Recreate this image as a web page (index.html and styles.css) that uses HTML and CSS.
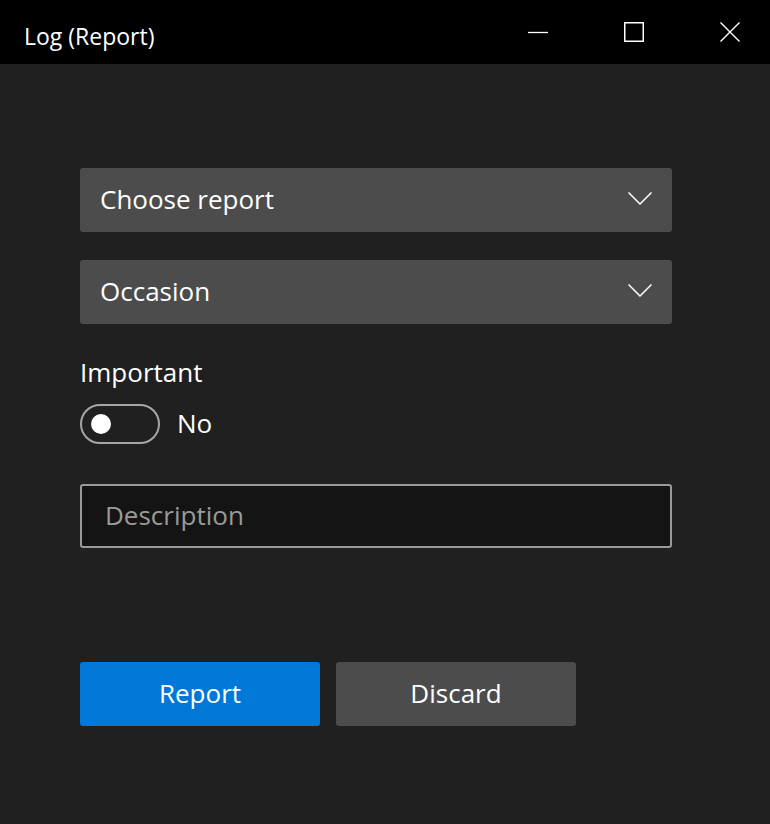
FILE: index.html
```html
<!DOCTYPE html>
<html>
<head>
<meta charset="utf-8">
<link rel="stylesheet" href="styles.css">
</head>
<body>
<div class="window">
  <div class="titlebar">
    <div class="title">Log (Report)</div>
    <div class="controls">
      <div class="ctl"><svg width="20" height="20" viewBox="0 0 20 20"><line x1="0" y1="10.5" x2="20" y2="10.5" stroke="#fff" stroke-width="1.3"/></svg></div>
      <div class="ctl"><svg width="20" height="20" viewBox="0 0 20 20"><rect x="0.75" y="0.75" width="18.5" height="18.5" fill="none" stroke="#fff" stroke-width="1.5"/></svg></div>
      <div class="ctl"><svg width="20" height="20" viewBox="0 0 20 20"><path d="M0.5 0.5 L19.5 19.5 M19.5 0.5 L0.5 19.5" stroke="#fff" stroke-width="1.4"/></svg></div>
    </div>
  </div>
  <div class="content">
    <div class="combo">
      <span>Choose report</span>
      <svg class="chev" width="24" height="13" viewBox="0 0 24 13"><path d="M0.5 0.5 L12 12 L23.5 0.5" fill="none" stroke="#fff" stroke-width="1.5"/></svg>
    </div>
    <div class="combo second">
      <span>Occasion</span>
      <svg class="chev" width="24" height="13" viewBox="0 0 24 13"><path d="M0.5 0.5 L12 12 L23.5 0.5" fill="none" stroke="#fff" stroke-width="1.5"/></svg>
    </div>
    <div class="label">Important</div>
    <div class="toggle-row">
      <div class="toggle"><div class="knob"></div></div>
      <span class="toggle-text">No</span>
    </div>
    <div class="textbox">Description</div>
    <div class="buttons">
      <div class="btn primary">Report</div>
      <div class="btn">Discard</div>
    </div>
  </div>
</div>
</body>
</html>
```
FILE: styles.css
```css
* { box-sizing: border-box; }
html, body { margin: 0; padding: 0; }
body {
  background: #202020;
  font-family: "Open Sans", "Noto Sans", sans-serif;
  color: #fff;
  width: 770px;
  height: 824px;
  overflow: hidden;
}
.window { width: 770px; height: 824px; display: flex; flex-direction: column; }
.titlebar {
  height: 64px;
  background: #000;
  display: flex;
  align-items: center;
  justify-content: space-between;
}
.title { font-size: 23px; padding-left: 24px; padding-top: 8px; }
.controls { display: flex; height: 64px; align-items: flex-start; padding-top: 22px; padding-right: 30px; gap: 76px; }
.ctl { width: 20px; height: 20px; }
.ctl svg { display: block; }
.content { padding: 104px 98px 0 80px; display: flex; flex-direction: column; }
.combo {
  height: 64px;
  background: #4c4c4c;
  border-radius: 3px;
  display: flex;
  align-items: center;
  justify-content: space-between;
  padding: 0 20px 0 20px;
  font-size: 26px;
}
.combo span { padding-bottom: 3px; }
.combo.second { margin-top: 28px; }
.chev { display: block; margin-top: -4px; }
.label { font-size: 26px; margin-top: 30px; line-height: 36px; }
.toggle-row { display: flex; align-items: center; margin-top: 14px; gap: 17px; }
.toggle {
  width: 80px; height: 40px;
  border: 2px solid #a6a6a6;
  border-radius: 20px;
  display: flex; align-items: center;
  padding-left: 9px;
}
.knob { width: 20px; height: 20px; border-radius: 50%; background: #fff; }
.toggle-text { font-size: 26px; padding-bottom: 2px; }
.textbox {
  margin-top: 40px;
  height: 64px;
  border: 2px solid #9a9a9a;
  border-radius: 3px;
  background: #141414;
  color: #9a9a9a;
  font-size: 26px;
  display: flex; align-items: center;
  padding: 0 0 3px 23px;
}
.buttons { display: flex; gap: 16px; margin-top: 114px; }
.btn {
  width: 240px; height: 64px;
  background: #4c4c4c;
  border-radius: 3px;
  display: flex; align-items: center; justify-content: center;
  font-size: 26px;
  padding-bottom: 3px;
}
.btn.primary { background: #0078d7; }
```
